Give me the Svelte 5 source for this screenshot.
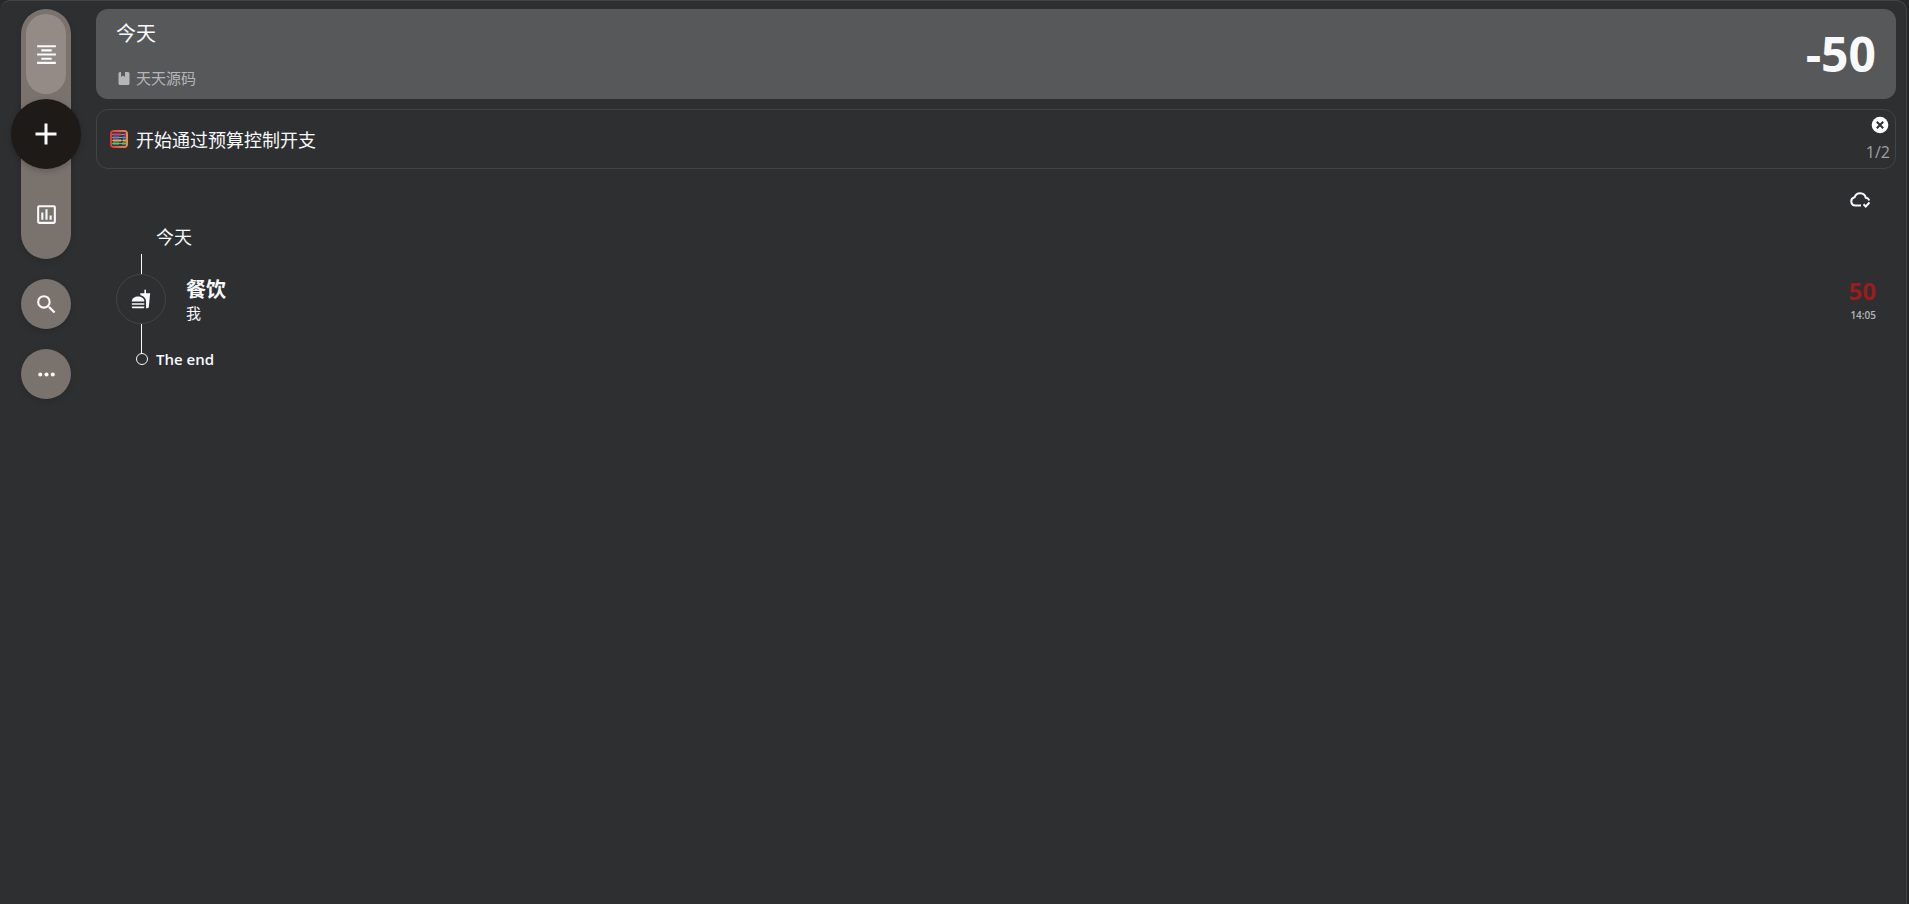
<script lang="ts">
  const ledger = "天天源码";

  const records = [
    { id: 1, category: "餐饮", member: "我", amount: 50, time: "14:05" },
  ];

  let tab = "list";
  let showTip = true;

  $: total = -records.reduce((sum, record) => sum + record.amount, 0);
</script>

<div class="window">
  <aside>
    <nav class="tabs">
      <button
        class="tab"
        class:active={tab === "list"}
        aria-label="流水"
        on:click={() => (tab = "list")}
      >
        <svg viewBox="0 0 24 24" width="25" height="25">
          <path d="M3 3h18v2H3zM7 7h10v2H7zM3 11h18v2H3zM7 15h10v2H7zM3 19h18v2H3z" />
        </svg>
      </button>
      <button class="add" aria-label="记一笔">
        <svg viewBox="0 0 24 24" width="36" height="36">
          <path d="M19 13h-6v6h-2v-6H5v-2h6V5h2v6h6z" />
        </svg>
      </button>
      <button
        class="tab"
        class:active={tab === "stat"}
        aria-label="统计"
        on:click={() => (tab = "stat")}
      >
        <svg viewBox="0 0 24 24" width="25" height="25">
          <path
            d="M19 3H5a2 2 0 0 0-2 2v14a2 2 0 0 0 2 2h14a2 2 0 0 0 2-2V5a2 2 0 0 0-2-2zm0 16H5V5h14zM7 10h2v7H7zm4-3h2v10h-2zm4 6h2v4h-2z"
          />
        </svg>
      </button>
    </nav>
    <button class="round" aria-label="搜索">
      <svg viewBox="0 0 24 24" width="25" height="25">
        <path
          d="M15.5 14h-.79l-.28-.27A6.47 6.47 0 0 0 16 9.5 6.5 6.5 0 1 0 9.5 16c1.61 0 3.09-.59 4.23-1.57l.27.28v.79l5 4.99L20.49 19zm-6 0a4.5 4.5 0 1 1 0-9 4.5 4.5 0 0 1 0 9z"
        />
      </svg>
    </button>
    <button class="round" aria-label="更多">
      <svg viewBox="0 0 24 24" width="25" height="25">
        <path
          d="M6 10a2 2 0 1 0 0 4 2 2 0 0 0 0-4zm12 0a2 2 0 1 0 0 4 2 2 0 0 0 0-4zm-6 0a2 2 0 1 0 0 4 2 2 0 0 0 0-4z"
        />
      </svg>
    </button>
  </aside>

  <main>
    <header class="summary">
      <div class="info">
        <h1>今天</h1>
        <a class="ledger" href="#ledger">
          <svg viewBox="0 0 12 14" width="12" height="14">
            <path
              d="M2 1h1v5l2-1.500L7 6V1h3a1.500 1.500 0 0 1 1.500 1.500V12.500A1.500 1.500 0 0 1 10 14H2A1.500 1.500 0 0 1 .5 12.500V2.500A1.500 1.500 0 0 1 2 1z"
            />
          </svg>
          {ledger}
        </a>
      </div>
      <strong class="total">{total}</strong>
    </header>

    {#if showTip}
      <section class="tip">
        <a href="#budget">
          <svg viewBox="0 0 18 18" width="18" height="18">
            <defs>
              <linearGradient id="frame">
                <stop offset="0" stop-color="#e0382f" />
                <stop offset="1" stop-color="#f08b4c" />
              </linearGradient>
            </defs>
            <rect width="18" height="18" rx="4" fill="url(#frame)" />
            <rect x="2" y="2" width="14" height="14" rx="1" fill="#383b42" />
            <path d="M2 4.500h14M2 7.500h14M2 10.500h14M2 13.500h14" stroke="#9b8fa3" stroke-width="1" />
            <path d="M3 4.500h8M14 4.500h2" stroke="#e0366f" stroke-width="2" />
            <path d="M3 7.500h6M13 7.500h3" stroke="#3e8de0" stroke-width="2" />
            <path d="M3 10.500h8M13 10.500h3" stroke="#f3a63b" stroke-width="2" />
            <path d="M3 13.500h6M12 13.500h4" stroke="#3ecf73" stroke-width="2" />
          </svg>
          开始通过预算控制开支
        </a>
        <div class="tip-side">
          <button aria-label="关闭" on:click={() => (showTip = false)}>
            <svg viewBox="0 0 18 18" width="18" height="18">
              <circle cx="9" cy="9" r="8.300" />
              <path class="cross" d="M5.800 5.800l6.400 6.400M12.200 5.800l-6.400 6.400" />
            </svg>
          </button>
          <span>1/2</span>
        </div>
      </section>
    {/if}

    <div class="sync">
      <button aria-label="同步">
        <svg viewBox="0 0 20 18" width="20" height="18">
          <path d="M11 14.500H5.300A4.200 4.200 0 0 1 4.600 6.200 5.800 5.800 0 0 1 15.800 6.700 3.800 3.800 0 0 1 19.200 9.500" />
          <path d="M13.500 13.300l2.200 2.200 3.800-4" />
        </svg>
      </button>
    </div>

    <section class="timeline">
      <h2>今天</h2>
      <ul>
        {#each records as record (record.id)}
          <li>
            <span class="icon">
              <svg viewBox="0 0 24 24" width="20" height="20">
                <path
                  d="M18.06 22.99h1.66c.84 0 1.53-.64 1.63-1.46L23 5.05h-5V1h-1.97v4.05h-4.97l.3 2.34c1.71.47 3.31 1.32 4.27 2.26 1.44 1.42 2.43 2.89 2.43 5.29v8.05zM1 21.99V21h15.03v.99c0 .55-.45 1-1.01 1H2.01c-.56 0-1.01-.45-1.01-1zM16.03 14.99c0-8-15.03-8-15.03 0h15.03zM1.02 17h15v2h-15z"
                />
              </svg>
            </span>
            <div class="detail">
              <h3>{record.category}</h3>
              <p>{record.member}</p>
            </div>
            <div class="cost">
              <strong>{record.amount}</strong>
              <time>{record.time}</time>
            </div>
          </li>
        {/each}
      </ul>
      <p class="end">The end</p>
    </section>
  </main>
</div>

<style>
  :global(body) {
    background-color: #262729;
  }

  * {
    box-sizing: border-box;
  }

  .window {
    display: flex;
    min-height: 100vh;
    margin-right: 2px;
    padding: 8px 10px 8px 0;
    border: solid #434446;
    border-width: 1px 1px 0 0;
    border-radius: 10px 10px 0 0;
    background-color: #2e2f31;
    color: #f8f9fc;
    font-family: "Open Sans", "Noto Sans CJK SC", sans-serif;
  }

  h1,
  h2,
  h3,
  p,
  ul {
    margin: 0;
    padding: 0;
    font-weight: 400;
  }

  button {
    display: flex;
    align-items: center;
    justify-content: center;
    padding: 0;
    border: none;
    background: none;
    color: inherit;
    cursor: pointer;
  }

  a {
    color: inherit;
    text-decoration: none;
  }

  svg {
    display: block;
    fill: currentColor;
  }

  aside {
    display: flex;
    flex-direction: column;
    align-items: center;
    gap: 20px;
    width: 96px;
    padding-right: 4px;
  }

  .tabs {
    display: flex;
    flex-direction: column;
    align-items: center;
    gap: 5px;
    width: 50px;
    padding: 5px 0;
    border-radius: 25px;
    background-color: #7a726c;
    box-shadow: 0 2px 6px rgba(0, 0, 0, 0.15);
  }

  .tab {
    width: 40px;
    height: 80px;
    border-radius: 20px;
  }

  .tab.active {
    background-color: #948b87;
  }

  .add {
    flex-shrink: 0;
    width: 70px;
    height: 70px;
    border-radius: 50%;
    background-color: #1d1a17;
    box-shadow: 0 2px 6px rgba(0, 0, 0, 0.2);
  }

  .round {
    width: 50px;
    height: 50px;
    border-radius: 50%;
    background-color: #7a726c;
    box-shadow: 0 2px 6px rgba(0, 0, 0, 0.15);
  }

  main {
    flex: 1;
  }

  .summary {
    display: flex;
    align-items: center;
    justify-content: space-between;
    height: 90px;
    padding: 0 20px;
    border-radius: 12px;
    background-color: #57585a;
  }

  .info {
    display: flex;
    flex-direction: column;
    gap: 20px;
  }

  h1 {
    font-size: 20px;
    line-height: 28px;
  }

  .ledger {
    display: flex;
    align-items: center;
    gap: 6px;
    padding-left: 2px;
    color: #b5b6b8;
    font-size: 15px;
    line-height: 20px;
  }

  .total {
    font-size: 48px;
    line-height: 60px;
  }

  .tip {
    display: flex;
    align-items: center;
    justify-content: space-between;
    height: 60px;
    margin-top: 10px;
    padding: 0 5px 0 13px;
    border: 1px solid #434446;
    border-radius: 12px;
  }

  .tip a {
    display: flex;
    align-items: center;
    gap: 8px;
    font-size: 18px;
  }

  .tip-side {
    display: flex;
    flex-direction: column;
    align-items: flex-end;
    gap: 8px;
    color: #a0a1a3;
    font-size: 16px;
    line-height: 20px;
  }

  .tip-side button {
    margin-right: 1px;
    color: #ffffff;
  }

  .cross {
    stroke: #2e2f31;
    stroke-width: 2;
  }

  .sync {
    display: flex;
    justify-content: flex-end;
    padding: 22px 26px 0 0;
  }

  .sync path {
    fill: none;
    stroke: currentColor;
    stroke-width: 2;
  }

  .timeline {
    padding: 0 20px;
  }

  h2 {
    margin-top: 14px;
    padding-left: 40px;
    font-size: 18px;
    line-height: 28px;
  }

  ul {
    list-style: none;
  }

  li {
    display: flex;
    align-items: center;
    padding-top: 3px;
  }

  .icon {
    display: flex;
    flex-direction: column;
    align-items: center;
    width: 50px;
    margin-right: 20px;
  }

  .icon::before {
    width: 1px;
    height: 20px;
    background-color: #f8f9fc;
    content: "";
  }

  .icon::after {
    width: 1px;
    height: 30px;
    background-color: #f8f9fc;
    content: "";
  }

  .icon svg {
    width: 50px;
    height: 50px;
    padding: 14px;
    border: 1px solid #434446;
    border-radius: 50%;
    overflow: visible;
  }

  .detail {
    flex: 1;
    padding-bottom: 8px;
  }

  h3 {
    font-size: 20px;
    font-weight: 700;
    line-height: 26px;
  }

  .detail p {
    font-size: 15px;
    line-height: 20px;
  }

  .cost {
    display: flex;
    flex-direction: column;
    align-items: flex-end;
    padding-bottom: 6px;
  }

  .cost strong {
    color: #9b1c1c;
    font-size: 24px;
    line-height: 28px;
  }

  time {
    color: #b5b6b8;
    font-size: 10px;
    font-weight: 600;
    line-height: 20px;
  }

  .end {
    display: flex;
    align-items: center;
    gap: 8px;
    margin-top: -1px;
    padding-left: 20px;
    font-size: 15px;
    font-weight: 600;
    line-height: 10px;
  }

  .end::before {
    width: 10px;
    height: 10px;
    border: 1px solid #f8f9fc;
    border-radius: 50%;
    content: "";
  }
</style>
